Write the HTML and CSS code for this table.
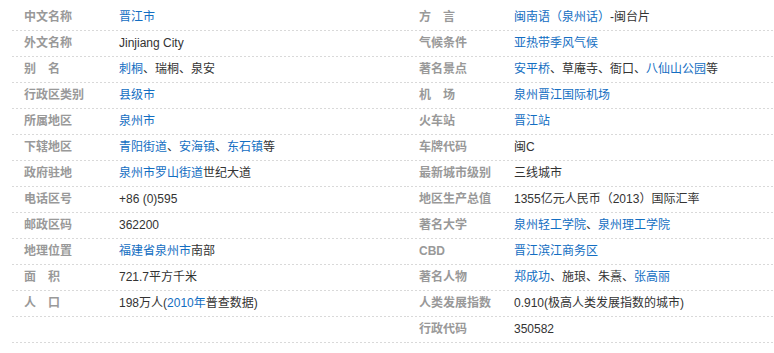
FILE: index.html
```html
<!DOCTYPE html>
<html lang="zh-CN">
<head>
<meta charset="utf-8">
<title>晋江市</title>
<link rel="stylesheet" href="styles.css">
</head>
<body>
<div class="info">
  <dl class="col col-left">
    <div class="row"><dt>中文名称</dt><dd><a>晋江市</a></dd></div>
    <div class="row"><dt>外文名称</dt><dd>Jinjiang City</dd></div>
    <div class="row"><dt>别　名</dt><dd><a>刺桐</a>、瑞桐、泉安</dd></div>
    <div class="row"><dt>行政区类别</dt><dd><a>县级市</a></dd></div>
    <div class="row"><dt>所属地区</dt><dd><a>泉州市</a></dd></div>
    <div class="row"><dt>下辖地区</dt><dd><a>青阳街道</a>、<a>安海镇</a>、<a>东石镇</a>等</dd></div>
    <div class="row"><dt>政府驻地</dt><dd><a>泉州市</a><a>罗山街道</a>世纪大道</dd></div>
    <div class="row"><dt>电话区号</dt><dd>+86 (0)595</dd></div>
    <div class="row"><dt>邮政区码</dt><dd>362200</dd></div>
    <div class="row"><dt>地理位置</dt><dd><a>福建省</a><a>泉州市</a>南部</dd></div>
    <div class="row"><dt>面　积</dt><dd>721.7平方千米</dd></div>
    <div class="row"><dt>人　口</dt><dd>198万人(<a>2010年</a>普查数据)</dd></div>
    <div class="row"><dt></dt><dd></dd></div>
  </dl>
  <dl class="col col-right">
    <div class="row"><dt>方　言</dt><dd><a>闽南语（泉州话）</a>-闽台片</dd></div>
    <div class="row"><dt>气候条件</dt><dd><a>亚热带季风气候</a></dd></div>
    <div class="row"><dt>著名景点</dt><dd><a>安平桥</a>、草庵寺、衙口、<a>八仙山公园</a>等</dd></div>
    <div class="row"><dt>机　场</dt><dd><a>泉州晋江国际机场</a></dd></div>
    <div class="row"><dt>火车站</dt><dd><a>晋江站</a></dd></div>
    <div class="row"><dt>车牌代码</dt><dd>闽C</dd></div>
    <div class="row"><dt>最新城市级别</dt><dd>三线城市</dd></div>
    <div class="row"><dt>地区生产总值</dt><dd>1355亿元人民币（2013）国际汇率</dd></div>
    <div class="row"><dt>著名大学</dt><dd><a>泉州轻工学院</a>、<a>泉州理工学院</a></dd></div>
    <div class="row"><dt>CBD</dt><dd><a>晋江滨江商务区</a></dd></div>
    <div class="row"><dt>著名人物</dt><dd><a>郑成功</a>、施琅、朱熹、<a>张高丽</a></dd></div>
    <div class="row"><dt>人类发展指数</dt><dd>0.910(极高人类发展指数的城市)</dd></div>
    <div class="row"><dt>行政代码</dt><dd>350582</dd></div>
  </dl>
</div>
</body>
</html>
```

FILE: styles.css
```css
html, body {
  margin: 0;
  padding: 0;
  background: #fff;
}

body {
  font-family: "Liberation Sans", "Noto Sans CJK SC", sans-serif;
  font-size: 12px;
  color: #333;
}

.info {
  display: flex;
  padding: 5px 0 0 12px;
}

.col {
  margin: 0;
  padding: 0;
}

.col-left {
  width: 395px;
  flex: none;
}

.col-right {
  flex: 1;
}

.row {
  display: flex;
  height: 26px;
  box-sizing: border-box;
  padding-bottom: 1px;
  line-height: 25px;
  background-image: linear-gradient(to right, #d9d9d9 50%, transparent 50%);
  background-size: 4px 1px;
  background-repeat: repeat-x;
  background-position: left bottom;
  white-space: nowrap;
}

dt {
  width: 95px;
  padding-left: 12px;
  flex: none;
  font-weight: bold;
  color: #999;
}

dd {
  margin: 0;
  flex: 1;
}

a {
  color: #136ec2;
  text-decoration: none;
}
```
